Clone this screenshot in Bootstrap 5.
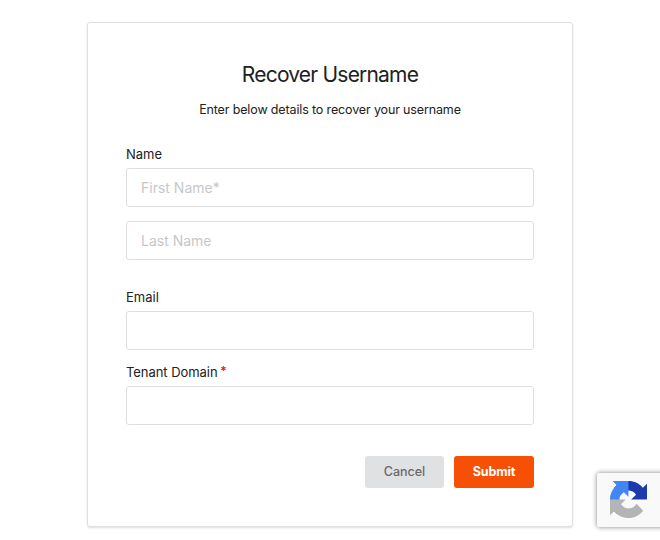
<!DOCTYPE html>
<html lang="en">
<head>
<meta charset="utf-8">
<meta name="viewport" content="width=device-width, initial-scale=1">
<title>Recover Username</title>
<link href="https://cdn.jsdelivr.net/npm/bootstrap@5.3.0/dist/css/bootstrap.min.css" rel="stylesheet">
<style>
body{font-family:Inter,"Liberation Sans",sans-serif;font-size:13px;color:#212121;background:#fff;height:540px;overflow:hidden}
.recover-panel{width:486px;height:505px;margin-top:22px;padding:37px 38px 0;border:1px solid #dedfe0;border-radius:3px;box-shadow:0 1px 2px rgba(34,36,38,.15)}
.recover-title{font-size:21px;line-height:30px;font-weight:400;letter-spacing:-.8px}
.recover-intro{font-size:12.5px;line-height:18px;margin-top:11px;letter-spacing:-.14px}
.recover-form{margin-top:26px}
.field-label{display:block;font-size:13px;line-height:18px;margin-bottom:5px}
.field-box.form-control{height:39px;padding:0 14px;font-size:14px;border-color:#dedfe0;border-radius:3px}
.field-box::placeholder{color:#c7c7c7}
.last-name{margin-top:14px}
.label-email{margin-top:28px}
.label-tenant{margin-top:13px;letter-spacing:-.05px}
.req{margin-left:-1px;vertical-align:2px;line-height:0;color:#e8131b;font-size:12px;font-weight:600}
.actions{margin-top:31px;gap:10px}
.act{height:32px;padding:0;border:0;border-radius:3px;font-size:12.5px;line-height:32px}
.act-cancel,.act-cancel:hover{width:79px;background:#e0e1e2;color:#68696a;font-weight:500}
.act-submit,.act-submit:hover{width:80px;background:#f55006;color:#fff;font-weight:700;letter-spacing:-.1px}
.captcha-badge{position:absolute;left:597px;top:473px;width:70px;height:54px;padding:8px 0 0 13px;background:#f9f9f9;border-radius:2px;box-shadow:0 0 5px gray}
</style>
</head>
<body>
<main class="recover-panel mx-auto">
  <h1 class="recover-title text-center mb-0">Recover Username</h1>
  <p class="recover-intro text-center mb-0">Enter below details to recover your username</p>
  <form class="recover-form">
    <label class="field-label" for="first">Name</label>
    <input id="first" class="form-control field-box" placeholder="First Name*">
    <input class="form-control field-box last-name" placeholder="Last Name" aria-label="Last Name">
    <label class="field-label label-email" for="mail">Email</label>
    <input id="mail" class="form-control field-box">
    <label class="field-label label-tenant" for="tenant">Tenant Domain <span class="req">*</span></label>
    <input id="tenant" class="form-control field-box">
    <div class="d-flex justify-content-end actions">
      <button type="button" class="btn act act-cancel">Cancel</button>
      <button type="button" class="btn act act-submit">Submit</button>
    </div>
  </form>
</main>
<div class="captcha-badge">
  <svg class="d-block" width="37" height="37" viewBox="0 0 64 64" aria-hidden="true">
    <path fill="#1c3aa9" d="M64 31.955l-.033-1.37V4.687l-7.16 7.16C50.948 4.674 42.033.093 32.05.093c-10.389 0-19.622 4.96-25.458 12.64l11.736 11.86a15.55 15.55 0 0 1 4.754-5.334c2.05-1.6 4.952-2.906 8.968-2.906.485 0 .86.057 1.135.163 4.976.393 9.288 3.14 11.828 7.124l-8.307 8.307L64 31.953"/>
    <path fill="#4285f4" d="M31.862.094l-1.37.033H4.594l7.16 7.16C4.58 13.147 0 22.06 0 32.046c0 10.388 4.96 19.622 12.64 25.458L24.5 45.768a15.55 15.55 0 0 1-5.334-4.754c-1.6-2.05-2.906-4.952-2.906-8.968 0-.485.057-.86.163-1.135.393-4.976 3.14-9.288 7.124-11.828l8.307 8.307L31.86.095"/>
    <path fill="#b4b4b4" d="M.001 32.045l.033 1.37v25.898l7.16-7.16c5.86 7.173 14.774 11.754 24.76 11.754 10.388 0 19.622-4.96 25.458-12.64l-11.736-11.86a15.55 15.55 0 0 1-4.754 5.334c-2.05 1.6-4.952 2.906-8.968 2.906-.485 0-.86-.057-1.135-.163-4.976-.393-9.288-3.14-11.828-7.124l8.307-8.307c-10.522.04-22.4.066-27.295-.005"/>
  </svg>
</div>
<script src="https://cdn.jsdelivr.net/npm/bootstrap@5.3.0/dist/js/bootstrap.bundle.min.js"></script>
</body>
</html>
